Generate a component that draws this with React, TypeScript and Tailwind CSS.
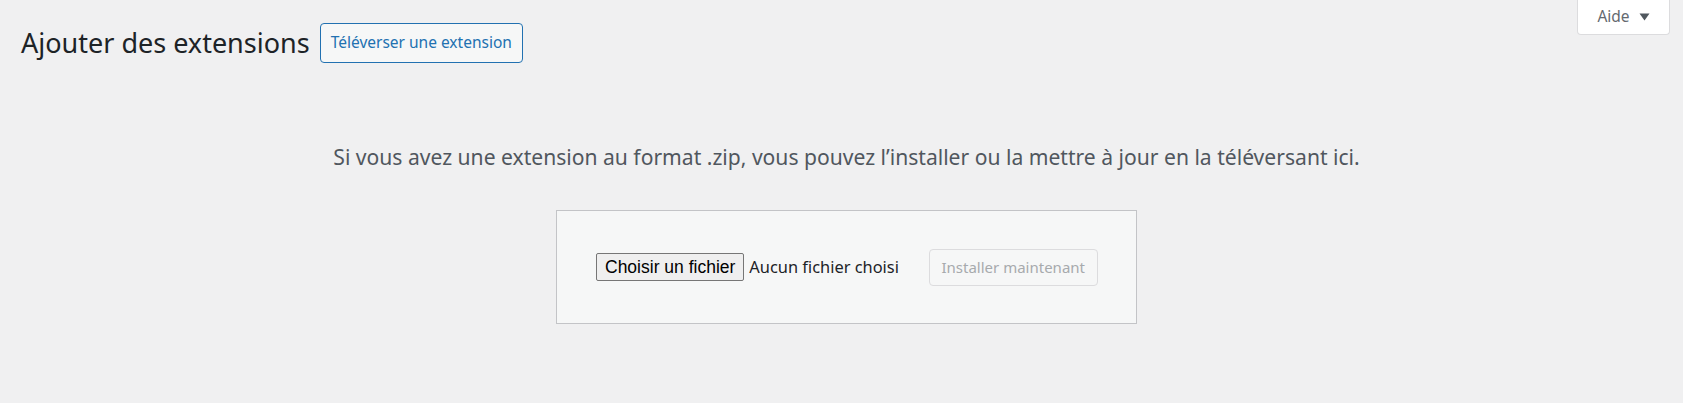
import React from 'react';

const sans = { fontFamily: '"Noto Sans", "Open Sans", sans-serif' };

export default function App() {
  return (
    <div className="relative min-h-[403px] w-full bg-[#f0f0f1] text-[#3c434a]" style={sans}>
      {/* Aide tab */}
      <div className="absolute right-[13px] top-0">
        <button className="flex h-[35px] w-[93px] items-center justify-center gap-[9px] rounded-b-[4px] border border-t-0 border-[#dcdcde] bg-white text-[15.5px] text-[#646970]">
          <span>Aide</span>
          <svg width="11" height="8" viewBox="0 0 11 8" aria-hidden="true">
            <path d="M0.5 0.5h10L5.5 7.5z" fill="#50575e" />
          </svg>
        </button>
      </div>

      <div className="pl-[21px] pr-[11px]">
        {/* Title row */}
        <div className="flex items-center gap-[10px] pt-[23px]">
          <h1 className="text-[27px] leading-[40px] font-normal text-[#1d2327]">Ajouter des extensions</h1>
          <button className="h-[40px] rounded-[4px] border-[1.5px] border-[#2271b1] bg-[#f6f7f7] px-[10px] text-[15.5px] text-[#2271b1]">
            Téléverser une extension
          </button>
        </div>

        {/* Upload area */}
        <p className="mt-[79px] text-center text-[21.1px] leading-[30px] text-[#50575e]">
          Si vous avez une extension au format .zip, vous pouvez l’installer ou la mettre à jour en la téléversant ici.
        </p>

        <div className="mt-[38px] flex justify-center">
          <form
            onSubmit={(e) => e.preventDefault()}
            className="flex h-[114px] w-[581px] items-center justify-between border border-[#c3c4c7] bg-[#f6f7f7] pl-[39px] pr-[38px]"
          >
            <div className="flex items-center">
              <span
                className="inline-flex h-[28px] items-center rounded-[2px] border border-[#767676] bg-[#efefef] px-[8px] text-[17.5px] text-black"
                style={{ fontFamily: '"Liberation Sans", Arial, sans-serif' }}
              >
                Choisir un fichier
              </span>
              <span className="ml-[5px] text-[16.4px] text-[#1d2327]">Aucun fichier choisi</span>
            </div>
            <button
              disabled
              className="h-[37px] rounded-[4px] border border-[#dcdcde] bg-[#f6f7f7] px-[12px] text-[15px] text-[#a7aaad]"
            >
              Installer maintenant
            </button>
          </form>
        </div>
      </div>
    </div>
  );
}
